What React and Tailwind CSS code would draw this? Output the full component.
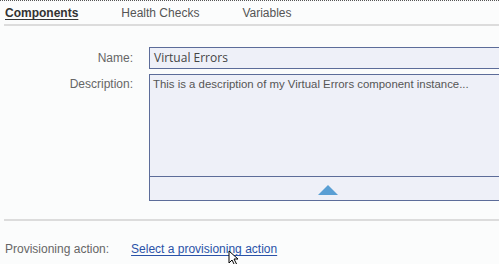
import React from "react";

export default function App() {
  return (
    <div className="w-[499px] h-[264px] overflow-hidden bg-[#fbfcfc] text-[12px] text-[#444] relative" style={{ fontFamily: '"Liberation Sans", Arial, sans-serif' }}>
      {/* dotted top edge */}
      <div className="h-px border-t border-dotted border-[#555]" />

      {/* tabs */}
      <div className="flex items-end h-[23px] pl-[5px] gap-[43px]">
        <span className="font-bold text-[#333] underline underline-offset-2 leading-[14px] pb-[4px]">Components</span>
        <span className="text-[#555] leading-[14px] pb-[4px]">Health Checks</span>
        <span className="text-[#555] leading-[14px] pb-[4px]">Variables</span>
      </div>
      <div className="ml-[4px] h-[2px] bg-[#dcdcdc]" />

      {/* form */}
      <div className="pt-[21px] flex flex-col gap-[5px]">
        <div className="flex items-center">
          <div className="w-[134px] shrink-0 text-right text-[#666] pr-[1px]">Name:</div>
          <div className="ml-[15px] w-[358px] h-[22px] border border-[#5c6c99] bg-[#eef0f8] flex items-center pl-[4px] text-[#444] shrink-0" style={{ fontFamily: '"Open Sans", sans-serif' }}>
            Virtual Errors
          </div>
        </div>
        <div className="flex items-start">
          <div className="w-[134px] shrink-0 text-right text-[#666] pr-[1px] pt-[1px]">Description:</div>
          <div className="ml-[15px] w-[358px] h-[127px] border border-[#5c6c99] bg-[#eef0f8] flex flex-col shrink-0">
            <div className="flex-1 pl-[3px] pt-[1px] text-[11.4px] text-[#555]">This is a description of my Virtual Errors component instance...</div>
            <div className="h-[24px] border-t border-[#5c6c99] flex justify-center pt-[8px]">
              <svg width="20" height="10" viewBox="0 0 20 10">
                <polygon points="10,0 20,10 0,10" fill="#5a9fd4" />
              </svg>
            </div>
          </div>
        </div>
      </div>

      <div className="ml-[4px] mt-[18px] h-[2px] bg-[#dcdcdc]" />

      <div className="flex items-center pl-[5px] pt-[19px]">
        <span className="text-[#666]">Provisioning action:</span>
        <a href="#" className="ml-[22px] text-[#2a52a8] underline underline-offset-2">Select a provisioning action</a>
      </div>

      {/* mouse cursor */}
      <svg className="absolute left-[228px] top-[250px]" width="12" height="16" viewBox="0 0 12 16">
        <path d="M1 1 L1 13 L4 10 L6.5 15 L8.5 14 L6 9 L10 9 Z" fill="#fff" stroke="#000" strokeWidth="1" />
      </svg>
    </div>
  );
}
